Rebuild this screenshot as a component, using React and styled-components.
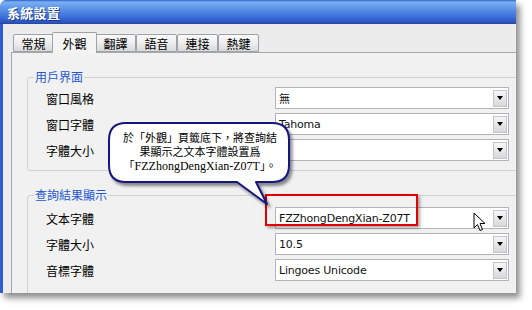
import styled, { createGlobalStyle } from "styled-components";

const GlobalStyle = createGlobalStyle`
  html, body {
    margin: 0;
    padding: 0;
    background: #ffffff;
  }
`;

const cjk = `"Noto Sans CJK TC", "Noto Sans CJK SC", sans-serif`;

const Stage = styled.div`
  position: relative;
  width: 532px;
  height: 310px;
  overflow: hidden;
  background: #fff;
`;

const Window = styled.div`
  width: 516px;
  height: 293px;
  display: flex;
  flex-direction: column;
  border-radius: 6px 0 0 0;
  box-shadow: 4px 5px 6px rgba(0, 0, 0, 0.45);
  overflow: hidden;
  background: #ececec;
`;

const TitleBar = styled.div`
  height: 24px;
  flex: none;
  display: flex;
  align-items: center;
  padding-left: 7px;
  box-sizing: border-box;
  background: linear-gradient(
    to bottom,
    #2f5fcf 0px,
    #7bb1f2 2px,
    #5e96e8 8px,
    #3a6ad6 18px,
    #2a50b8 23px,
    #1f3f9c 24px
  );
  color: #fff;
  font-family: ${cjk};
  font-weight: bold;
  font-size: 13px;
  text-shadow: 1px 1px 0 #1a3a8a;
  letter-spacing: 0.3px;
`;

const Body = styled.div`
  flex: 1;
  display: flex;
  flex-direction: column;
  border-left: 3px solid #2c5dd2;
  padding: 7px 0 0 8px;
  background: #ececec;
`;

const TabRow = styled.div`
  display: flex;
  align-items: flex-end;
  height: 21px;
  padding-left: 2px;
  position: relative;
  z-index: 1;
`;

const Tab = styled.div`
  box-sizing: border-box;
  width: ${(p) => (p.$active ? 45 : 41)}px;
  margin: 0 ${(p) => (p.$active ? -2 : 0)}px;
  height: ${(p) => (p.$active ? 21 : 18)}px;
  margin-bottom: ${(p) => (p.$active ? -1 : 0)}px;
  border: 1px solid #9ea3a8;
  border-bottom: ${(p) => (p.$active ? "none" : "1px solid #9ea3a8")};
  border-radius: 2px 2px 0 0;
  background: ${(p) =>
    p.$active
      ? "#f4f4f4"
      : "linear-gradient(to bottom, #fafafa 0%, #eeeeee 50%, #d9d9d9 100%)"};
  z-index: ${(p) => (p.$active ? 2 : 0)};
  display: flex;
  align-items: center;
  justify-content: center;
  padding-top: ${(p) => (p.$active ? 0 : 1)}px;
  font-family: ${cjk};
  font-size: 12px;
  color: #000;
`;

const Pane = styled.div`
  flex: 1;
  border-top: 1px solid #a4a8ac;
  border-left: 1px solid #a4a8ac;
  background: #f1f1f1;
  padding: 17px 0 6px 15px;
  display: flex;
  flex-direction: column;
  gap: 17px;
`;

const Group = styled.fieldset`
  margin: 0;
  margin-right: -30px;
  border: 1px solid #d2d2d2;
  border-radius: 3px;
  padding: ${(p) => p.$pad};
  display: flex;
  flex-direction: column;
  gap: 4px;
`;

const Legend = styled.legend`
  padding: 0 1px;
  margin-left: 6px;
  font-family: ${cjk};
  font-size: 12px;
  line-height: 14px;
  color: #2457d0;
`;

const Row = styled.div`
  display: flex;
  align-items: center;
  height: 22px;
`;

const Label = styled.div`
  width: 229px;
  padding-left: 18px;
  flex: none;
  font-family: ${cjk};
  font-size: 12px;
  color: #000;
`;

const Combo = styled.div`
  width: 234px;
  height: 22px;
  box-sizing: border-box;
  border: 1px solid #b1b5ba;
  background: #fff;
  display: flex;
  align-items: center;
  padding: 0 1px 0 3px;
  font-family: "DejaVu Sans", ${cjk};
  font-size: 11px;
  letter-spacing: -0.2px;
  color: #111;
`;

const ComboText = styled.span`
  flex: 1;
`;

const ComboButton = styled.div`
  width: 14px;
  height: 17px;
  box-sizing: border-box;
  border: 1px solid #c2c5c9;
  background: linear-gradient(to bottom, #f6f6f6, #d8d8d8);
  display: flex;
  align-items: center;
  justify-content: center;
  &::after {
    content: "";
    border-left: 3.5px solid transparent;
    border-right: 3.5px solid transparent;
    border-top: 4px solid #000;
  }
`;

const Callout = styled.div`
  position: absolute;
  left: 104px;
  top: 118px;
  width: 192px;
  height: 94px;
`;

const CalloutText = styled.div`
  position: absolute;
  left: 4px;
  top: 13px;
  width: 184px;
  text-align: center;
  font-family: "Liberation Serif", ${cjk};
  font-size: 11px;
  line-height: 14px;
  color: #000;
`;

const Latin = styled.span`
  font-size: 12px;
`;

const Highlight = styled.div`
  position: absolute;
  left: 265px;
  top: 194px;
  width: 153px;
  height: 32px;
  box-sizing: border-box;
  border: 2px solid #e40000;
  box-shadow: 2px 2px 3px rgba(0, 0, 0, 0.35);
`;

const Cursor = styled.svg`
  position: absolute;
  left: 473px;
  top: 212px;
`;

const Bubble = () => (
  <svg width="192" height="94" viewBox="0 0 192 94">
    <defs>
      <filter id="sh" x="-10%" y="-10%" width="130%" height="140%">
        <feDropShadow dx="2.5" dy="3" stdDeviation="1.6" floodColor="#000" floodOpacity="0.45" />
      </filter>
    </defs>
    <path
      d="M22 5 H168 Q185 5 185 22 V47 Q185 64 168 64 H152 L163 86 L133 64 H22 Q5 64 5 47 V22 Q5 5 22 5 Z"
      fill="#fff"
      stroke="#15157e"
      strokeWidth="2"
      strokeLinejoin="round"
      filter="url(#sh)"
    />
  </svg>
);

const general = [
  { label: "窗口風格", value: "無" },
  { label: "窗口字體", value: "Tahoma" },
  { label: "字體大小", value: "" },
];

const result = [
  { label: "文本字體", value: "FZZhongDengXian-Z07T" },
  { label: "字體大小", value: "10.5" },
  { label: "音標字體", value: "Lingoes Unicode" },
];

const tabs = ["常規", "外觀", "翻譯", "語音", "連接", "熱鍵"];

function Field({ label, value }) {
  return (
    <Row>
      <Label>{label}</Label>
      <Combo>
        <ComboText>{value}</ComboText>
        <ComboButton />
      </Combo>
    </Row>
  );
}

export default function App() {
  return (
    <Stage>
      <GlobalStyle />
      <Window>
        <TitleBar>系統設置</TitleBar>
        <Body>
          <TabRow>
            {tabs.map((t) => (
              <Tab key={t} $active={t === "外觀"}>
                {t}
              </Tab>
            ))}
          </TabRow>
          <Pane>
            <Group $pad="3px 0 9px 0">
              <Legend>用戶界面</Legend>
              {general.map((f) => (
                <Field key={f.label} {...f} />
              ))}
            </Group>
            <Group $pad="5px 0 13px 0">
              <Legend>查詢結果顯示</Legend>
              {result.map((f) => (
                <Field key={f.label} {...f} />
              ))}
            </Group>
          </Pane>
        </Body>
      </Window>

      <Highlight />
      <Callout>
        <Bubble />
        <CalloutText>
          於「外觀」頁籤底下，將查詢結
          <br />
          果顯示之文本字體設置爲
          <br />
          「<Latin>FZZhongDengXian-Z07T</Latin>」。
        </CalloutText>
      </Callout>
      <Cursor width="13" height="21" viewBox="0 0 13 21">
        <path
          d="M1 1 L1 16 L4.5 12.5 L7 18.5 L9.5 17.5 L7 11.5 L12 11.5 Z"
          fill="#fff"
          stroke="#000"
          strokeWidth="1"
          strokeLinejoin="round"
        />
      </Cursor>
    </Stage>
  );
}
